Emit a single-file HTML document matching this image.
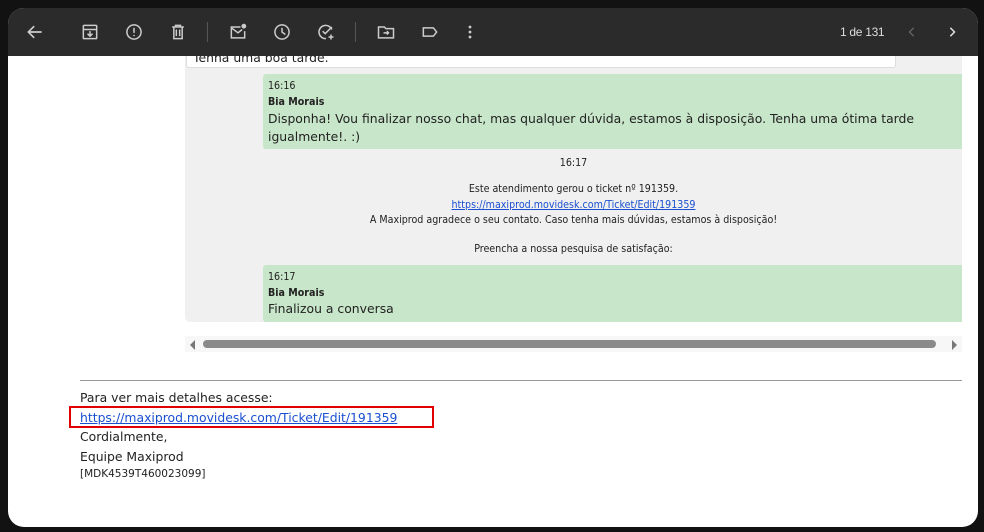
<!DOCTYPE html>
<html><head><meta charset="utf-8"><style>
*{margin:0;padding:0;box-sizing:border-box}
body{width:984px;height:532px;background:#121212;position:relative;overflow:hidden;font-family:"DejaVu Sans","Liberation Sans",sans-serif}
.card{position:absolute;left:8px;top:8px;width:970px;height:519px;background:#fff;border-radius:16px;overflow:hidden}
.tb{position:absolute;left:0;top:0;width:970px;height:48px;background:#2b2b2b;z-index:5}
.ic{position:absolute;top:14px}
.sep{position:absolute;top:14px;width:1px;height:20px;background:#555}
.a{position:absolute;white-space:nowrap;color:#222}
.s{font-family:"DejaVu Sans Condensed","DejaVu Sans",sans-serif;font-size:10.6px;color:#222}
.m{font-size:12.4px;color:#222}
a{color:#1a4fd1;text-decoration:underline}
</style></head><body>
<div class="card">
<div class="tb">
<svg class="ic" style="left:17px" width="20" height="20" viewBox="0 0 24 24" fill="none" stroke="#ccc" stroke-width="2"><path d="M20 12H5M11 5l-7 7 7 7"/></svg>
<svg class="ic" style="left:72px" width="20" height="20" viewBox="0 0 24 24" fill="none" stroke="#ccc" stroke-width="1.8"><rect x="4" y="4" width="16" height="16" rx="1"/><path d="M4 9h16M12 11v6M9 14l3 3 3-3"/></svg>
<svg class="ic" style="left:116px" width="20" height="20" viewBox="0 0 24 24" fill="none" stroke="#ccc" stroke-width="1.8"><circle cx="12" cy="12" r="8.5"/><path d="M12 7v6M12 15.5v1.5"/></svg>
<svg class="ic" style="left:160px" width="20" height="20" viewBox="0 0 24 24" fill="none" stroke="#ccc" stroke-width="1.8"><path d="M5 6h14M9 6V4h6v2M7 6v14h10V6M10 9v8M14 9v8"/></svg>
<div class="sep" style="left:199px"></div>
<svg class="ic" style="left:220px" width="20" height="20" viewBox="0 0 24 24" fill="none" stroke="#ccc" stroke-width="1.8"><path d="M15 6H4v13h16v-8"/><path d="M4 7l8 6 5-4"/><circle cx="19" cy="5" r="2" fill="#ccc"/></svg>
<svg class="ic" style="left:264px" width="20" height="20" viewBox="0 0 24 24" fill="none" stroke="#ccc" stroke-width="1.8"><circle cx="12" cy="12" r="8.5"/><path d="M12 7v5l4 3"/></svg>
<svg class="ic" style="left:308px" width="20" height="20" viewBox="0 0 24 24" fill="none" stroke="#ccc" stroke-width="1.8"><path d="M19 9A8 8 0 1 0 12 20"/><path d="M8 11l3 3 8-8M18 15v6M15 18h6"/></svg>
<div class="sep" style="left:347px"></div>
<svg class="ic" style="left:368px" width="20" height="20" viewBox="0 0 24 24" fill="none" stroke="#ccc" stroke-width="1.8"><path d="M3 6h7l2 2h9v11H3z"/><path d="M9 13h6M13 11l2 2-2 2"/></svg>
<svg class="ic" style="left:412px" width="20" height="20" viewBox="0 0 24 24" fill="none" stroke="#ccc" stroke-width="1.8"><path d="M4 7h12l4 5-4 5H4z"/></svg>
<svg class="ic" style="left:456px" width="12" height="20" viewBox="0 0 12 24" fill="#ccc"><circle cx="6" cy="6" r="1.7"/><circle cx="6" cy="12" r="1.7"/><circle cx="6" cy="18" r="1.7"/></svg>
<div class="a" style="left:832px;top:17px;color:#ddd;font-size:12px;font-family:'Liberation Sans',sans-serif;letter-spacing:-0.3px">1 de 131</div>
<svg class="ic" style="left:896px" width="16" height="20" viewBox="0 0 16 24" fill="none" stroke="#666" stroke-width="1.6"><path d="M10 7l-5 5 5 5"/></svg>
<svg class="ic" style="left:936px" width="16" height="20" viewBox="0 0 16 24" fill="none" stroke="#ddd" stroke-width="1.8"><path d="M6 7l5 5-5 5"/></svg>
</div>
<div style="position:absolute;left:177px;top:48px;width:777px;height:266px;background:#f0f0f0;border-radius:0 0 0 5px"></div>
<div style="position:absolute;left:178px;top:40px;width:710px;height:20px;background:#fff;border:1px solid #ddd;border-radius:3px"></div>
<div class="a m" style="left:185px;top:42px">Tenha uma boa tarde.</div>
<div style="position:absolute;left:255px;top:66px;width:699px;height:75px;background:#c8e6c9;border-radius:3px 0 0 3px"></div>
<div class="a s" style="left:260px;top:72px">16:16</div>
<div class="a s" style="left:260px;top:88px;font-weight:bold">Bia Morais</div>
<div class="a m" style="left:260px;top:102px;line-height:18px">Disponha! Vou finalizar nosso chat, mas qualquer dúvida, estamos à disposição. Tenha uma ótima tarde<br>igualmente!. :)</div>
<div class="a s" style="left:177px;width:777px;text-align:center;top:149px">16:17</div>
<div class="a s" style="left:177px;width:777px;text-align:center;top:174px;line-height:15.5px">Este atendimento gerou o ticket nº 191359.<br><a>https://maxiprod.movidesk.com/Ticket/Edit/191359</a><br>A Maxiprod agradece o seu contato. Caso tenha mais dúvidas, estamos à disposição!</div>
<div class="a s" style="left:177px;width:777px;text-align:center;top:235px">Preencha a nossa pesquisa de satisfação:</div>
<div style="position:absolute;left:255px;top:257px;width:699px;height:57px;background:#c8e6c9;border-radius:3px 0 0 3px"></div>
<div class="a s" style="left:260px;top:263px">16:17</div>
<div class="a s" style="left:260px;top:279px;font-weight:bold">Bia Morais</div>
<div class="a m" style="left:260px;top:293px">Finalizou a conversa</div>
<div style="position:absolute;left:177px;top:328px;width:777px;height:16px;background:#f7f7f7"></div>
<svg style="position:absolute;left:181px;top:332px" width="8" height="10"><path d="M6 0v10L1 5z" fill="#777"/></svg>
<div style="position:absolute;left:195px;top:332px;width:733px;height:8px;background:#8a8a8a;border-radius:4px"></div>
<svg style="position:absolute;left:942px;top:332px" width="8" height="10"><path d="M2 0v10l5-5z" fill="#777"/></svg>
<div style="position:absolute;left:72px;top:372px;width:882px;height:1px;background:#999"></div>
<div class="a m" style="left:72px;top:380px;line-height:19.5px">Para ver mais detalhes acesse:<br><a>https://maxiprod.movidesk.com/Ticket/Edit/191359</a><br>Cordialmente,<br>Equipe Maxiprod</div>
<div class="a" style="left:72px;top:460px;font-size:10.5px;color:#222">[MDK4539T460023099]</div>
<div style="position:absolute;left:61px;top:398px;width:365px;height:22px;border:2px solid #e00000"></div>
</div>
</body></html>
